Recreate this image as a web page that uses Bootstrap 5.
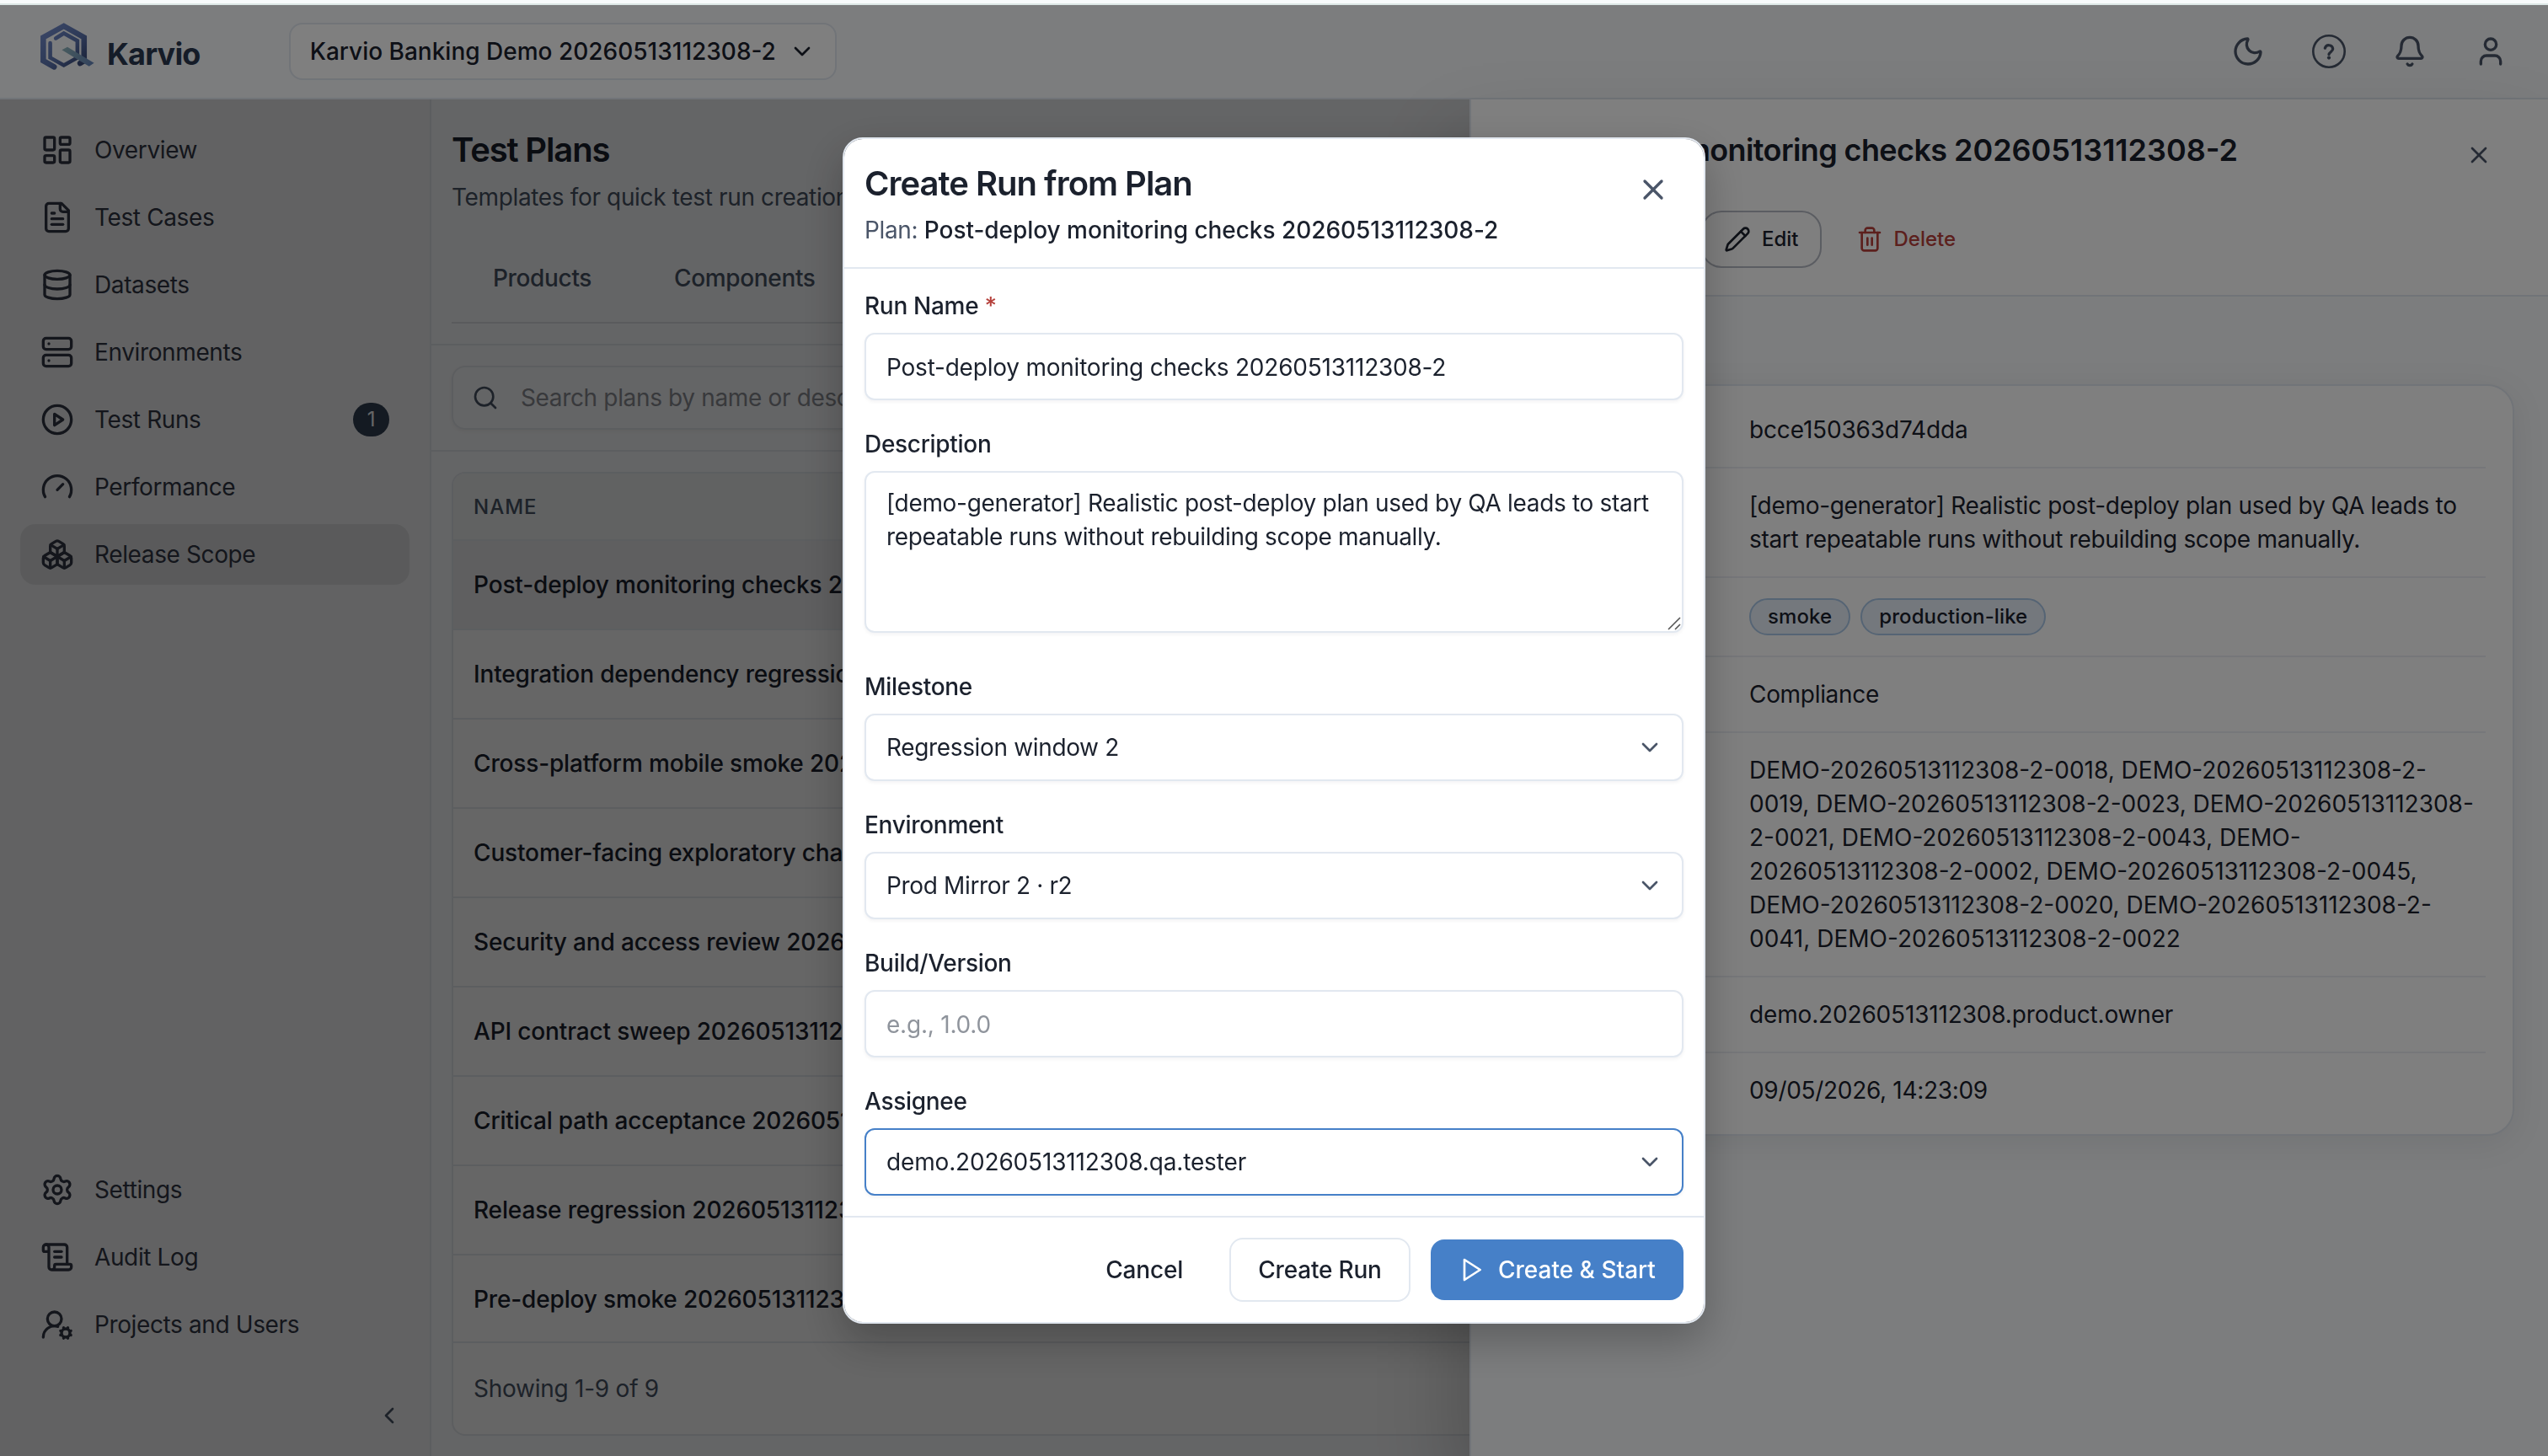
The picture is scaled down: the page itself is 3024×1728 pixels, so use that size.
<!DOCTYPE html>
<html lang="en">

<head>
    <meta charset="UTF-8">
    <meta name="viewport" content="width=device-width, initial-scale=1.0">
    <title>Karvio - Test Plans</title>
    <link href="https://cdn.jsdelivr.net/npm/bootstrap@5.3.0/dist/css/bootstrap.min.css" rel="stylesheet">
    <style>
        :root {
            --ink: #1b212d;
            --muted: #4a5568;
            --line: #e2e8f0;
            --brand: #4680c8;
        }

        html {
            font-size: 32px;
        }

        body {
            font-family: Inter, "Liberation Sans", sans-serif;
            font-size: 28px;
            line-height: 40px;
            letter-spacing: -.35px;
            color: var(--ink);
            background: #f7fafb;
            height: 1728px;
            overflow: hidden;
        }

        .ls-0 {
            letter-spacing: 0;
        }

        .ls-1 {
            letter-spacing: -.16px;
        }

        .plan-ref {
            font-weight: 500;
            letter-spacing: -.04px;
        }

        .ico {
            width: 32px;
            height: 32px;
            flex: none;
            fill: none;
            stroke: currentColor;
            stroke-width: 2;
            stroke-linecap: round;
            stroke-linejoin: round;
        }

        .ico-lg {
            width: 40px;
            height: 40px;
        }

        .top-strip {
            height: 6px;
            background: #f7fafb;
            border-bottom: 2px solid #dce7e6;
        }

        .app {
            height: 1722px;
            position: relative;
            overflow: hidden;
        }

        /* header */
        .app-header {
            height: 112px;
            padding: 0 48px;
            background: #f8fafc;
            border-bottom: 2px solid var(--line);
        }

        .brand-logo {
            width: 64px;
            height: 56px;
            margin-bottom: 12px;
        }

        .brand-name {
            font-size: 36px;
            font-weight: 700;
            letter-spacing: -.8px;
            color: #2b3850;
            margin-left: 15px;
            padding-top: 5px;
        }

        .project-btn {
            width: 650px;
            height: 68px;
            margin-left: 105px;
            padding: 0 23px;
            border: 2px solid var(--line);
            border-radius: 16px;
            background: #fff;
            font-weight: 500;
        }

        .header-icons {
            gap: 56px;
            color: #4a5568;
        }

        /* sidebar */
        .side {
            width: 512px;
            padding: 24px;
            background: #f6f7f9;
            border-right: 2px solid #e8ebf0;
            letter-spacing: -.38px;
        }

        .side-item {
            height: 72px;
            padding: 0 24px;
            gap: 24px;
            border-radius: 18px;
            color: #343948;
        }

        .side-list {
            gap: 8px;
        }

        .side-item.active {
            background: #e2e3e5;
        }

        .run-count {
            width: 43px;
            height: 40px;
            border-radius: 20px;
            background: #334155;
            color: #fff;
            font-size: 24px;
        }

        /* main column */
        .plans {
            background: #fcfdff;
        }

        .plans-top {
            padding: 32px 24px 24px;
            height: 292px;
            border-bottom: 2px solid #e8ebf0;
        }

        .plans-title {
            font-size: 40px;
            line-height: 56px;
            font-weight: 600;
            letter-spacing: -1.15px;
            margin: 0 0 8px;
        }

        .sub-text {
            color: var(--muted);
        }

        .plan-tabs {
            margin-top: 34px;
            height: 96px;
            gap: 98px;
            padding: 22px 49px 0;
            border-bottom: 2px solid #e2e5ea;
            font-weight: 500;
            color: var(--muted);
        }

        .search-wrap {
            padding: 24px;
            border-bottom: 2px solid #e8ebf0;
        }

        .search-box {
            height: 76px;
            border: 2px solid #e8ebf0;
            border-radius: 16px;
            padding: 0 22px;
            gap: 26px;
            color: var(--muted);
            box-shadow: 0 2px 4px rgba(0, 0, 0, .05);
        }

        .search-box span {
            color: #8d9096;
        }

        .plan-table {
            margin: 24px 24px 0;
            border: 2px solid #e8ebf0;
            border-radius: 16px;
            overflow: hidden;
            background: #fff;
        }

        .plan-head {
            height: 80px;
            padding: 2px 24px 0;
            background: #f3f5f7;
            border-bottom: 2px solid #e8ebf0;
            font-size: 24px;
            font-weight: 500;
            letter-spacing: 1px;
            color: var(--muted);
        }

        .plan-row {
            height: 106px;
            padding: 0 24px;
            border-bottom: 2px solid #e8ebf0;
            font-weight: 500;
            letter-spacing: -.15px;
            white-space: nowrap;
        }

        .plan-row.picked {
            background: #eeeef0;
        }

        .plan-row:last-child {
            height: 104px;
            padding-top: 1px;
        }

        .plan-foot {
            height: 108px;
            padding: 0 24px;
            color: var(--muted);
            letter-spacing: -.25px;
        }

        /* drawer over the page body */
        .drawer-shade {
            position: absolute;
            inset: 112px 0 0 0;
            background: rgba(0, 0, 0, .2);
        }

        .drawer {
            position: absolute;
            top: 112px;
            right: 0;
            bottom: 0;
            width: 1280px;
            background: #f8fafc;
            border-left: 2px solid var(--line);
            box-shadow: -16px 48px 90px rgba(0, 0, 0, .2);
        }

        .drawer-head {
            height: 234px;
            padding: 34px 24px 0;
            background: #fff;
            border-bottom: 2px solid var(--line);
        }

        .drawer-title {
            font-size: 36px;
            line-height: 52px;
            font-weight: 600;
            letter-spacing: -.6px;
            margin: 0;
            padding-left: 14px;
        }

        .drawer-close {
            margin: 16px 42px 0 0;
            color: var(--muted);
        }

        .drawer-actions {
            margin-top: 46px;
            padding-left: 249px;
            gap: 14px;
        }

        .act {
            height: 68px;
            padding: 0 25px;
            gap: 13px;
            border: 2px solid transparent;
            border-radius: 24px;
            font-size: 24px;
            font-weight: 500;
            letter-spacing: 0;
        }

        .act-line {
            border-color: #b6bac4;
        }

        .act-red {
            color: #b8403b;
        }

        .info-card {
            margin: 104px 40px 0;
            padding: 8px 32px;
            background: #fff;
            border: 2px solid var(--line);
            border-radius: 32px;
            box-shadow: 0 8px 40px rgba(15, 23, 42, .08);
        }

        .info-row {
            padding: 24px 0;
            border-bottom: 2px solid #eceff4;
            letter-spacing: -.31px;
        }

        .info-row:last-child {
            border-bottom: 0;
        }

        .info-row dt {
            width: 256px;
            flex: none;
        }

        .info-row dd {
            flex: 1;
            margin: 0;
        }

        .tags {
            gap: 12px;
        }

        .tag {
            height: 44px;
            padding: 0 20px;
            border: 2px solid #abc8e8;
            border-radius: 22px;
            background: #e9f1fb;
            font-size: 24px;
            font-weight: 500;
            letter-spacing: .1px;
        }

        /* create run modal */
        .shade {
            position: fixed;
            inset: 6px 0 0 0;
            background: rgba(0, 0, 0, .5);
            z-index: 1050;
        }

        .run-modal {
            top: 6px;
            height: 1722px;
        }

        .run-modal .modal-dialog {
            max-width: 1024px;
            margin: 0 auto;
            min-height: 100%;
        }

        .run-modal .modal-content {
            border: 2px solid var(--line);
            border-radius: 24px;
            color: var(--ink);
            box-shadow: 0 20px 50px rgba(0, 0, 0, .25);
        }

        .run-modal .modal-header {
            padding: 25px 24px 24px;
            border-bottom: 2px solid var(--line);
            height: 154px;
        }

        .run-modal .modal-title {
            font-size: 40px;
            line-height: 56px;
            font-weight: 600;
            letter-spacing: -1px;
            margin-bottom: 7px;
        }

        .run-modal .modal-body {
            padding: 24px;
        }

        .modal-close {
            margin: 15px 16px 0 0;
            color: #4a5568;
        }

        .field + .field {
            margin-top: 32px;
        }

        .field .form-label {
            display: block;
            font-weight: 500;
            letter-spacing: -.3px;
            margin-bottom: 12px;
        }

        .required {
            color: #b5403b;
        }

        .field .form-control,
        .pick {
            height: 80px;
            padding: 1px 24px 0;
            font-size: 28px;
            line-height: 40px;
            color: var(--ink);
            background: #fff;
            border: 2px solid var(--line);
            border-radius: 12px;
            box-shadow: 0 2px 4px rgba(15, 23, 42, .05);
        }

        .field input.form-control {
            letter-spacing: -.22px;
        }

        .field .form-control::placeholder {
            color: #8f949c;
        }

        .field textarea.form-control {
            height: 192px;
            padding: 16px 24px;
            letter-spacing: -.32px;
            resize: none;
        }

        .area-wrap {
            margin-bottom: 44px;
        }

        .area-grip {
            position: absolute;
            right: 2px;
            bottom: 1px;
            width: 20px;
            height: 20px;
            stroke: #555;
            stroke-width: 1.6;
        }

        .pick {
            padding: 0 22px 0 24px;
        }

        .pick .ico {
            color: #4a5568;
        }

        .pick-focus {
            border-color: var(--brand);
        }

        .run-modal .modal-footer {
            padding: 24px;
            gap: 24px;
            border-top: 2px solid var(--line);
        }

        .run-modal .modal-footer > * {
            margin: 0;
        }

        .run-btn {
            height: 72px;
            padding: 0 31px;
            border: 0;
            border-radius: 16px;
            font-size: 28px;
            line-height: 40px;
            font-weight: 500;
            letter-spacing: -.2px;
            color: var(--ink);
        }

        .run-btn-line {
            width: 215px;
            height: 76px;
            border: 2px solid var(--line);
        }

        .run-btn-brand,
        .run-btn-brand:hover {
            width: 300px;
            padding: 0 32px;
            letter-spacing: 0;
            background: var(--brand);
            color: #fff;
        }
    </style>
</head>

<body>
<div class="top-strip"></div>
<div class="app d-flex flex-column">
    <header class="app-header d-flex align-items-center">
        <svg class="brand-logo" viewBox="54 50 194 170" fill="none" stroke-linecap="round" stroke-linejoin="miter">
            <defs>
                <linearGradient id="logoBlue" gradientUnits="userSpaceOnUse" x1="80" y1="60" x2="200" y2="200">
                    <stop offset="0" stop-color="#728bcb"/>
                    <stop offset=".6" stop-color="#5a72ac"/>
                    <stop offset="1" stop-color="#3a4a78"/>
                </linearGradient>
                <linearGradient id="logoTail" gradientUnits="userSpaceOnUse" x1="135" y1="140" x2="240" y2="200">
                    <stop offset="0" stop-color="#8fb6bd"/>
                    <stop offset="1" stop-color="#6585ba"/>
                </linearGradient>
            </defs>
            <path d="M103 209 64 187V103L138 62l73 41v84l-14 9" stroke="url(#logoBlue)" stroke-width="20"/>
            <path d="M109 106l29-18 49 27v61l-49 27-49-27v-53" stroke="url(#logoBlue)" stroke-width="14"/>
            <path d="M131 148l20-11 96 58-18 12z" fill="url(#logoTail)"/>
        </svg>
        <span class="brand-name">Karvio</span>
        <div class="project-btn d-flex align-items-center justify-content-between">
            <span class="ls-0">Karvio Banking Demo 20260513112308-2</span>
            <svg class="ico" viewBox="0 0 24 24"><path d="m6 9 6 6 6-6"/></svg>
        </div>
        <div class="header-icons d-flex align-items-center ms-auto">
            <svg class="ico ico-lg" viewBox="0 0 24 24"><path d="M20.985 12.486a9 9 0 1 1-9.473-9.472c.405-.022.617.46.402.803a6 6 0 0 0 8.268 8.268c.344-.215.825-.004.803.401"/></svg>
            <svg class="ico ico-lg" viewBox="0 0 40 40"><circle cx="20" cy="20" r="18.7" stroke-width="2.6"/><path d="M15.3 16.2a4.8 4.8 0 0 1 9.4.9c0 3.2-4.7 3.9-4.7 6.6" stroke-width="3.2"/><circle cx="20" cy="27.6" r="2.1" fill="currentColor" stroke="none"/></svg>
            <svg class="ico ico-lg" viewBox="0 0 24 24"><path d="M10.268 21a2 2 0 0 0 3.464 0"/><path d="M3.262 15.326A1 1 0 0 0 4 17h16a1 1 0 0 0 .74-1.673C19.41 13.956 18 12.499 18 8A6 6 0 0 0 6 8c0 4.499-1.411 5.956-2.738 7.326"/></svg>
            <svg class="ico ico-lg" viewBox="0 0 24 24"><path d="M19 21v-2a4 4 0 0 0-4-4H9a4 4 0 0 0-4 4v2"/><circle cx="12" cy="7" r="4"/></svg>
        </div>
    </header>

    <div class="d-flex flex-grow-1">
        <nav class="side d-flex flex-column justify-content-between flex-shrink-0">
            <div class="side-list d-flex flex-column">
                <div class="side-item d-flex align-items-center">
                    <svg class="ico ico-lg" viewBox="0 0 24 24"><rect width="7" height="9" x="3" y="3" rx="1"/><rect width="7" height="5" x="14" y="3" rx="1"/><rect width="7" height="9" x="14" y="12" rx="1"/><rect width="7" height="5" x="3" y="16" rx="1"/></svg>
                    Overview
                </div>
                <div class="side-item d-flex align-items-center">
                    <svg class="ico ico-lg" viewBox="0 0 24 24"><path d="M15 2H6a2 2 0 0 0-2 2v16a2 2 0 0 0 2 2h12a2 2 0 0 0 2-2V7Z"/><path d="M14 2v4a2 2 0 0 0 2 2h4"/><path d="M10 9H8"/><path d="M16 13H8"/><path d="M16 17H8"/></svg>
                    Test Cases
                </div>
                <div class="side-item d-flex align-items-center">
                    <svg class="ico ico-lg" viewBox="0 0 24 24"><ellipse cx="12" cy="5" rx="9" ry="3"/><path d="M3 5V19A9 3 0 0 0 21 19V5"/><path d="M3 12A9 3 0 0 0 21 12"/></svg>
                    Datasets
                </div>
                <div class="side-item d-flex align-items-center">
                    <svg class="ico ico-lg" viewBox="0 0 24 24"><rect width="20" height="8" x="2" y="2" rx="2"/><rect width="20" height="8" x="2" y="14" rx="2"/><path d="M6 6h.01"/><path d="M6 18h.01"/></svg>
                    Environments
                </div>
                <div class="side-item d-flex align-items-center">
                    <svg class="ico ico-lg" viewBox="0 0 24 24"><circle cx="12" cy="12" r="10"/><path d="m10 8 6 4-6 4z"/></svg>
                    Test Runs
                    <span class="run-count d-flex align-items-center justify-content-center ms-auto">1</span>
                </div>
                <div class="side-item d-flex align-items-center">
                    <svg class="ico ico-lg" viewBox="0 0 24 24"><path d="m12 14 4-4"/><path d="M3.34 19a10 10 0 1 1 17.32 0"/></svg>
                    Performance
                </div>
                <div class="side-item active d-flex align-items-center">
                    <svg class="ico ico-lg" viewBox="0 0 24 24"><path d="M2.97 12.92A2 2 0 0 0 2 14.63v3.24a2 2 0 0 0 .97 1.71l3 1.8a2 2 0 0 0 2.06 0L12 19v-5.5l-5-3-4.03 2.42Z"/><path d="m7 16.5-4.74-2.85"/><path d="m7 16.5 5-3"/><path d="M7 16.5v5.17"/><path d="M12 13.5V19l3.97 2.38a2 2 0 0 0 2.06 0l3-1.8a2 2 0 0 0 .97-1.71v-3.24a2 2 0 0 0-.97-1.71L17 10.5l-5 3Z"/><path d="m17 16.5-5-3"/><path d="m17 16.5 4.74-2.85"/><path d="M17 16.5v5.17"/><path d="M7.97 4.42A2 2 0 0 0 7 6.13v4.37l5 3 5-3V6.13a2 2 0 0 0-.97-1.71l-3-1.8a2 2 0 0 0-2.06 0l-3 1.8Z"/><path d="M12 8 7.26 5.15"/><path d="m12 8 4.74-2.85"/><path d="M12 13.5V8"/></svg>
                    Release Scope
                </div>
            </div>
            <div class="side-list d-flex flex-column">
                <div class="side-item d-flex align-items-center">
                    <svg class="ico ico-lg" viewBox="0 0 24 24"><path d="M9.671 4.136a2.34 2.34 0 0 1 4.659 0 2.34 2.34 0 0 0 3.319 1.915 2.34 2.34 0 0 1 2.33 4.033 2.34 2.34 0 0 0 0 3.831 2.34 2.34 0 0 1-2.33 4.033 2.34 2.34 0 0 0-3.319 1.915 2.34 2.34 0 0 1-4.659 0 2.34 2.34 0 0 0-3.32-1.915 2.34 2.34 0 0 1-2.33-4.033 2.34 2.34 0 0 0 0-3.831A2.34 2.34 0 0 1 6.35 6.051a2.34 2.34 0 0 0 3.319-1.915"/><circle cx="12" cy="12" r="3"/></svg>
                    Settings
                </div>
                <div class="side-item d-flex align-items-center">
                    <svg class="ico ico-lg" viewBox="0 0 24 24"><path d="M15 12h-5"/><path d="M15 8h-5"/><path d="M19 17V5a2 2 0 0 0-2-2H4"/><path d="M8 21h12a2 2 0 0 0 2-2v-1a1 1 0 0 0-1-1H11a1 1 0 0 0-1 1v1a2 2 0 1 1-4 0V5a2 2 0 1 0-4 0v2a1 1 0 0 0 1 1h3"/></svg>
                    Audit Log
                </div>
                <div class="side-item d-flex align-items-center">
                    <svg class="ico ico-lg" viewBox="0 0 24 24"><path d="m14.305 19.53.923-.382"/><path d="m15.228 16.852-.923-.383"/><path d="m16.852 15.228-.383-.923"/><path d="m16.852 20.772-.383.924"/><path d="m19.148 15.228.383-.923"/><path d="m19.53 21.696-.382-.924"/><path d="M2 21a8 8 0 0 1 10.434-7.62"/><path d="m20.772 16.852.924-.383"/><path d="m20.772 19.148.924.383"/><circle cx="10" cy="8" r="5"/><circle cx="18" cy="18" r="3"/></svg>
                    Projects and Users
                </div>
                <div class="d-flex justify-content-end pt-4 pe-1 pb-1 sub-text">
                    <svg class="ico" viewBox="0 0 24 24"><path d="m15 18-6-6 6-6"/></svg>
                </div>
            </div>
        </nav>

        <main class="plans flex-grow-1">
            <div class="plans-top">
                <h1 class="plans-title">Test Plans</h1>
                <div class="sub-text">Templates for quick test run creation</div>
                <div class="plan-tabs d-flex">
                    <span>Products</span>
                    <span>Components</span>
                </div>
            </div>
            <div class="search-wrap">
                <div class="search-box d-flex align-items-center">
                    <svg class="ico" viewBox="0 0 24 24"><circle cx="11" cy="11" r="8"/><path d="m21 21-4.34-4.34"/></svg>
                    <span>Search plans by name or description</span>
                </div>
            </div>
            <div class="plan-table">
                <div class="plan-head d-flex align-items-center">NAME</div>
                <div id="planRows"></div>
                <div class="plan-foot d-flex align-items-center">Showing 1-9 of 9</div>
            </div>
        </main>
    </div>

    <div class="drawer-shade"></div>
    <aside class="drawer">
        <div class="drawer-head">
            <div class="d-flex justify-content-between">
                <h2 class="drawer-title">Post-deploy monitoring checks <span class="ls-0">20260513112308-2</span></h2>
                <svg class="ico drawer-close" viewBox="0 0 24 24"><path d="M18 6 6 18"/><path d="m6 6 12 12"/></svg>
            </div>
            <div class="drawer-actions d-flex">
                <div class="act act-line d-flex align-items-center">
                    <svg class="ico" viewBox="0 0 24 24"><path d="M21.174 6.812a1 1 0 0 0-3.986-3.987L3.842 16.174a2 2 0 0 0-.5.83l-1.321 4.352a.5.5 0 0 0 .623.622l4.353-1.32a2 2 0 0 0 .83-.497z"/><path d="m15 5 4 4"/></svg>
                    Edit
                </div>
                <div class="act act-red d-flex align-items-center">
                    <svg class="ico" viewBox="0 0 24 24"><path d="M3 6h18"/><path d="M19 6v14c0 1-1 2-2 2H7c-1 0-2-1-2-2V6"/><path d="M8 6V4c0-1 1-2 2-2h4c1 0 2 1 2 2v2"/><path d="M10 11v6"/><path d="M14 11v6"/></svg>
                    Delete
                </div>
            </div>
        </div>
        <dl class="info-card">
            <div class="info-row d-flex"><dt></dt><dd class="ls-1">bcce150363d74dda</dd></div>
            <div class="info-row d-flex"><dt></dt><dd>[demo-generator] Realistic post-deploy plan used by QA leads to start repeatable runs without rebuilding scope manually.</dd></div>
            <div class="info-row d-flex"><dt></dt>
                <dd class="tags d-flex">
                    <span class="tag d-flex align-items-center">smoke</span>
                    <span class="tag d-flex align-items-center">production-like</span>
                </dd>
            </div>
            <div class="info-row d-flex"><dt></dt><dd>Compliance</dd></div>
            <div class="info-row d-flex"><dt></dt><dd class="ls-0">DEMO-20260513112308-2-0018, DEMO-20260513112308-2-0019, DEMO-20260513112308-2-0023, DEMO-20260513112308-2-0021, DEMO-20260513112308-2-0043, DEMO-20260513112308-2-0002, DEMO-20260513112308-2-0045, DEMO-20260513112308-2-0020, DEMO-20260513112308-2-0041, DEMO-20260513112308-2-0022</dd></div>
            <div class="info-row d-flex"><dt></dt><dd class="ls-1">demo.20260513112308.product.owner</dd></div>
            <div class="info-row d-flex"><dt></dt><dd>09/05/2026, 14:23:09</dd></div>
        </dl>
    </aside>
</div>

<div class="shade"></div>

<div class="modal run-modal d-block" tabindex="-1">
    <div class="modal-dialog modal-dialog-centered">
        <div class="modal-content">
            <div class="modal-header align-items-start">
                <div>
                    <h5 class="modal-title">Create Run from Plan</h5>
                    <div><span class="sub-text">Plan:</span> <span class="plan-ref">Post-deploy monitoring checks 20260513112308-2</span></div>
                </div>
                <svg class="ico ico-lg modal-close" viewBox="0 0 24 24"><path d="M18 6 6 18"/><path d="m6 6 12 12"/></svg>
            </div>
            <div class="modal-body">
                <div class="field">
                    <label class="form-label">Run Name <span class="required">*</span></label>
                    <input type="text" class="form-control" value="Post-deploy monitoring checks 20260513112308-2">
                </div>
                <div class="field">
                    <label class="form-label">Description</label>
                    <div class="area-wrap position-relative">
                        <textarea class="form-control">[demo-generator] Realistic post-deploy plan used by QA leads to start repeatable runs without rebuilding scope manually.</textarea>
                        <svg class="area-grip" viewBox="0 0 20 20"><path d="M4 17 18 3M12 17l6-6"/></svg>
                    </div>
                </div>
                <div class="field">
                    <label class="form-label">Milestone</label>
                    <div class="pick d-flex align-items-center justify-content-between">
                        Regression window 2
                        <svg class="ico" viewBox="0 0 24 24"><path d="m6 9 6 6 6-6"/></svg>
                    </div>
                </div>
                <div class="field">
                    <label class="form-label">Environment</label>
                    <div class="pick d-flex align-items-center justify-content-between">
                        Prod Mirror 2 · r2
                        <svg class="ico" viewBox="0 0 24 24"><path d="m6 9 6 6 6-6"/></svg>
                    </div>
                </div>
                <div class="field">
                    <label class="form-label">Build/Version</label>
                    <input type="text" class="form-control" placeholder="e.g., 1.0.0">
                </div>
                <div class="field">
                    <label class="form-label">Assignee</label>
                    <div class="pick pick-focus d-flex align-items-center justify-content-between">
                        <span class="ls-1">demo.20260513112308.qa.tester</span>
                        <svg class="ico" viewBox="0 0 24 24"><path d="m6 9 6 6 6-6"/></svg>
                    </div>
                </div>
            </div>
            <div class="modal-footer">
                <button type="button" class="btn run-btn">Cancel</button>
                <button type="button" class="btn run-btn run-btn-line">Create Run</button>
                <button type="button" class="btn run-btn run-btn-brand d-flex align-items-center gap-2">
                    <svg class="ico" viewBox="0 0 24 24"><path d="m6 3 14 9-14 9z"/></svg>
                    Create &amp; Start
                </button>
            </div>
        </div>
    </div>
</div>

<script src="https://cdn.jsdelivr.net/npm/bootstrap@5.3.0/dist/js/bootstrap.bundle.min.js"></script>
<script>
    const plans = [
        'Post-deploy monitoring checks 20260513112308-2',
        'Integration dependency regression 20260513112308-2',
        'Cross-platform mobile smoke 20260513112308-2',
        'Customer-facing exploratory charter 20260513112308-2',
        'Security and access review 20260513112308-2',
        'API contract sweep 20260513112308-2',
        'Critical path acceptance 20260513112308-2',
        'Release regression 20260513112308-2',
        'Pre-deploy smoke 20260513112308-2'
    ];

    document.getElementById('planRows').innerHTML = plans.map((name, i) => `
        <div class="plan-row d-flex align-items-center ${i === 0 ? 'picked' : ''}">${name}</div>
    `).join('');
</script>
</body>

</html>
